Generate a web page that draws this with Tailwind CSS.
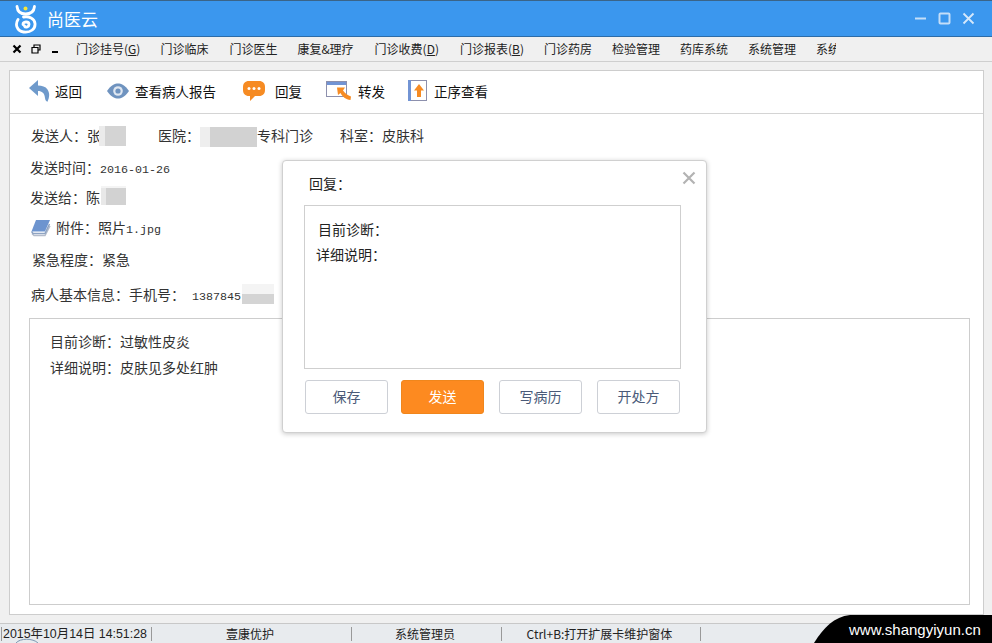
<!DOCTYPE html>
<html lang="zh">
<head>
<meta charset="utf-8">
<script src="https://cdn.jsdelivr.net/npm/@tailwindcss/browser@4"></script>
</head>
<body class="relative w-[992px] h-[643px] overflow-hidden bg-[#f0f0f0] text-[#333] font-['Noto_Sans_CJK_SC','Liberation_Sans',sans-serif]">
<div class="flex flex-col h-[643px]">
  <!-- title bar -->
  <header class="h-[37px] shrink-0 flex items-center bg-[#3b97ee] border-t border-t-[#3a6488] border-b border-b-[#2c6ca8]">
    <svg class="ml-[14px] w-[24px] h-[30px]" viewBox="0 0 24 30" fill="none">
      <circle cx="11.500" cy="4.500" r="2" fill="#f6e53a"/>
      <path d="M3 2.500C3.500 7.500 6.500 10 11.500 10C16.500 10 20 7.500 20.500 2.500" stroke="#fff" stroke-width="2.800" stroke-linecap="round"/>
      <path d="M9 20.500C9 17.500 14.500 17 15 20C15.300 23 11.500 24 10.500 22M4 15.500C1 20 2.500 27 9.500 28C17 29 21.500 24.500 21 19.500C20.500 14.500 15 12 9.500 13" stroke="#fff" stroke-width="2.800" stroke-linecap="round"/>
    </svg>
    <span class="ml-[9px] text-[17px] leading-[24px] text-white">尚医云</span>
    <div class="ml-auto mr-[17px] flex items-center gap-[11px]">
      <svg class="w-[13px] h-[13px]" viewBox="0 0 13 13"><path d="M1 6.500H12" stroke="#c4def8" stroke-width="2"/></svg>
      <svg class="w-[13px] h-[13px]" viewBox="0 0 13 13" fill="none"><rect x="1.500" y="1.500" width="10" height="10" rx="1" stroke="#c4def8" stroke-width="2"/></svg>
      <svg class="w-[13px] h-[13px]" viewBox="0 0 13 13"><path d="M1.500 1.500L11.500 11.500M11.500 1.500L1.500 11.500" stroke="#d5e8fb" stroke-width="1.800"/></svg>
    </div>
  </header>
  <!-- menu bar -->
  <nav class="h-[25px] shrink-0 flex items-center border-b border-b-[#cfcfcf] text-[12px] leading-[20px] text-[#222]">
    <div class="w-[76px] shrink-0 flex items-center pl-[12px]">
      <svg class="w-[10px] h-[10px]" viewBox="0 0 10 10"><path d="M1.500 1.500L8.500 8.500M8.500 1.500L1.500 8.500" stroke="#000" stroke-width="2.200"/></svg>
      <svg class="ml-[9px] w-[10px] h-[10px]" viewBox="0 0 10 10" fill="none"><path d="M3 3V1H9V6H7M1 3.500H7V9H1Z" stroke="#000" stroke-width="1.200"/></svg>
      <span class="ml-[11px] mt-[6px] w-[6px] h-[2px] bg-black"></span>
    </div>
    <ul class="flex gap-[20px] whitespace-nowrap w-[760px] overflow-hidden">
      <li>门诊挂号(<span class="underline">G</span>)</li>
      <li>门诊临床</li>
      <li class="ml-px">门诊医生</li>
      <li>康复&amp;理疗</li>
      <li class="ml-px">门诊收费(<span class="underline">D</span>)</li>
      <li class="ml-px">门诊报表(<span class="underline">B</span>)</li>
      <li>门诊药房</li>
      <li>检验管理</li>
      <li>药库系统</li>
      <li>系统管理</li>
      <li>系统管理</li>
    </ul>
  </nav>
  <!-- main panel -->
  <main class="mt-[8px] ml-[9px] w-[975px] h-[545px] shrink-0 bg-white border border-[#cdcdcd] flex flex-col text-[14px] leading-[24px]">
    <div class="h-[43px] shrink-0 border-b border-b-[#d4d4d4] flex items-center pb-[3px] text-[13.5px] text-[#111]">
      <svg class="ml-[19px] w-[21px] h-[22px]" viewBox="0 0 21 22"><path d="M9 0L0 8L9 16V11C13 11 15.500 13 16 18C16.300 20 17 21.500 18.500 21.800C20.500 17 21 13.500 18.500 9.500C16.500 6.500 13 5.500 9 5.500Z" fill="#6f9acb"/></svg>
      <span class="ml-[5px]">返回</span>
      <svg class="ml-[25px] w-[22px] h-[16px]" viewBox="0 0 22 16"><path d="M0 8C4 2 8 .5 11 .5C14 .5 18 2 22 8C18 14 14 15.500 11 15.500C8 15.500 4 14 0 8Z" fill="#6f93bf"/><circle cx="11" cy="8" r="4.800" fill="#dfe7f1"/><circle cx="11" cy="8" r="2.600" fill="#6f93bf"/></svg>
      <span class="ml-[6px]">查看病人报告</span>
      <svg class="ml-[27px] w-[22px] h-[20px]" viewBox="0 0 22 20"><path d="M6 0H16C20 0 22 2.500 22 6V9C22 12.500 20 15 16 15H12L7 20V15H6C2 15 0 12.500 0 9V6C0 2.500 2 0 6 0Z" fill="#f68b23"/><circle cx="6" cy="7.500" r="1.500" fill="#fff"/><circle cx="11" cy="7.500" r="1.500" fill="#fff"/><circle cx="16" cy="7.500" r="1.500" fill="#fff"/></svg>
      <span class="ml-[10px]">回复</span>
      <svg class="ml-[24px] w-[26px] h-[20px]" viewBox="0 0 26 20" fill="none"><rect x=".5" y=".5" width="20" height="15" stroke="#8d90ad"/><rect x="1" y="1" width="19" height="3" fill="#7294d4"/><path d="M11 6.500L19 6.500L17 9.500C19 12.500 22 14.500 25 15.500L24.500 19C20 18.500 16 15.500 14.500 12L12 14Z" fill="#f68b23"/></svg>
      <span class="ml-[6px]">转发</span>
      <svg class="ml-[23px] w-[19px] h-[21px]" viewBox="0 0 19 21" fill="none"><rect x=".5" y=".5" width="18" height="20" stroke="#8d90ad"/><rect x="0" y="0" width="3" height="21" fill="#7294d4"/><path d="M11 4L16 10.500H13V17H9V10.500H6Z" fill="#f68b23"/></svg>
      <span class="ml-[7px]">正序查看</span>
    </div>
    <div class="flex-1 flex flex-col">
      <div class="mt-[9px] ml-[21px] h-[24px] flex">
        <span>发送人&#xFF1A;张</span>
        <span class="ml-[-2px] mt-[3px] w-[27px] h-[20px] bg-[#d4d4d4] border-l-[6px] border-l-[#ebebeb]"></span>
        <span class="ml-[32px]">医院&#xFF1A;</span>
        <span class="mt-[4px] w-[57px] h-[20px] bg-[#d2d2d2] border-l-[10px] border-l-[#eeeeee]"></span>
        <span>专科门诊</span>
        <span class="ml-[27px]">科室&#xFF1A;皮肤科</span>
      </div>
      <div class="mt-[8px] ml-[20px] h-[24px]">发送时间&#xFF1A;<span class="font-['Liberation_Mono',monospace] text-[11.67px]">2016-01-26</span></div>
      <div class="mt-[6px] ml-[20px] h-[24px] flex">
        <span>发送给&#xFF1A;陈</span>
        <span class="ml-px mt-[3px] w-[25px] h-[17px] bg-[#d2d2d2] border-l-[5px] border-l-[#e8e8e8] shadow-[0_-2px_0_#f4f4f4]"></span>
      </div>
      <div class="mt-[7px] ml-[21px] h-[24px] flex items-center">
        <svg class="w-[20px] h-[18px]" viewBox="0 0 20 18"><path d="M1 14.500L3 16.500H14L19 7" fill="none" stroke="#b4bccb" stroke-width="1.500"/><path d="M.5 12.500L2 14.500H14L18.500 5" fill="none" stroke="#8ea3c2" stroke-width="1.500"/><path d="M5 1H19L14 12.500H.5Z" fill="#6d94cf"/></svg>
        <span class="ml-[5px]">附件&#xFF1A;照片<span class="font-['Liberation_Mono',monospace] text-[11.67px]">1.jpg</span></span>
      </div>
      <div class="mt-[7px] ml-[22px] h-[24px]">紧急程度&#xFF1A;紧急</div>
      <div class="mt-[11px] ml-[21px] h-[24px] flex">
        <span class="whitespace-pre">病人基本信息&#xFF1A;手机号&#xFF1A;<span class="font-['Liberation_Mono',monospace] text-[11.67px]"> 1387845</span></span>
        <span class="ml-px mt-[2px] w-[32px] h-[20px] bg-[linear-gradient(#f4f4f4_50%,#d4d4d4_50%)]"></span>
      </div>
      <div class="mt-[12px] ml-[19px] w-[941px] h-[287px] border border-[#cdcdcd] pl-[20px] pt-[9px] leading-[26px]">
        <p>目前诊断&#xFF1A;过敏性皮炎</p>
        <p>详细说明&#xFF1A;皮肤见多处红肿</p>
      </div>
    </div>
  </main>
  <!-- status bar -->
  <footer class="mt-auto h-[20px] shrink-0 bg-[#e8ebee] border-t border-t-[#c8c8c8] flex items-center text-[12px] leading-[18px] text-[#222] overflow-hidden">
    <div class="ml-[1px] w-[150px] h-[14px] border-l border-l-[#999] flex items-center pl-[1px] whitespace-nowrap text-[12.4px] font-['Liberation_Sans','Noto_Sans_CJK_SC',sans-serif]">2015年10月14日 14:51:28</div>
    <div class="w-[200px] h-[14px] border-l border-l-[#999] flex items-center justify-center pr-[3px]">壹康优护</div>
    <div class="w-[150px] h-[14px] border-l border-l-[#999] flex items-center justify-center pr-[3px]">系统管理员</div>
    <div class="w-[200px] h-[14px] border-l border-l-[#999] border-r border-r-[#999] flex items-center justify-center pr-[3px] whitespace-nowrap">Ctrl+B:打开扩展卡维护窗体</div>
  </footer>
</div>

<!-- reply dialog -->
<section class="absolute left-[282px] top-[160px] w-[425px] h-[273px] bg-white border border-[#d0d0d0] rounded-[4px] shadow-[0_1px_5px_rgba(0,0,0,0.22)] pl-[21px] text-[14px]">
  <svg class="absolute right-[10px] top-[10px] w-[14px] h-[14px]" viewBox="0 0 14 14"><path d="M1.500 1.500L12.500 12.500M12.500 1.500L1.500 12.500" stroke="#b3b3b3" stroke-width="2.200"/></svg>
  <h2 class="pt-[10px] pl-[5px] h-[44px] leading-[24px] font-normal text-[#222]">回复&#xFF1A;</h2>
  <div class="w-[377px] h-[164px] border border-[#cfcfcf] pl-[12px] pt-[11px] leading-[25px] text-[#222]">
    <p class="pl-[1px]">目前诊断&#xFF1A;</p>
    <p class="ml-[-1px]">详细说明&#xFF1A;</p>
  </div>
  <div class="mt-[11px] ml-[1px] flex gap-[13px] text-[#4a5a78]">
    <button class="w-[83px] h-[34px] pb-[2px] border border-[#cdd0d6] rounded-[3px] bg-white">保存</button>
    <button class="w-[83px] h-[34px] pb-[2px] border border-[#f0861c] rounded-[3px] bg-[#fd8a20] text-white">发送</button>
    <button class="w-[83px] h-[34px] pb-[2px] border border-[#cdd0d6] rounded-[3px] bg-white ml-[2px]">写病历</button>
    <button class="w-[83px] h-[34px] pb-[2px] border border-[#cdd0d6] rounded-[3px] bg-white ml-[2px]">开处方</button>
  </div>
</section>

<!-- watermark -->
<svg class="absolute left-[814px] top-[615px] w-[178px] h-[28px]" viewBox="0 0 178 28"><path d="M0 28C10 12 20 2 36 0H178V28Z" fill="#000"/></svg>
<span class="absolute left-[849px] top-[621px] text-[15px] leading-[18px] text-white font-['Liberation_Sans',sans-serif] whitespace-nowrap">www.shangyiyun.cn</span>
<svg class="absolute left-[15px] top-[637px] w-[24px] h-[6px]" viewBox="0 0 24 6" fill="none"><path d="M1 6C5 1 18 1 23 6" stroke="#7c97b2" stroke-width="1"/></svg>
</body>
</html>
